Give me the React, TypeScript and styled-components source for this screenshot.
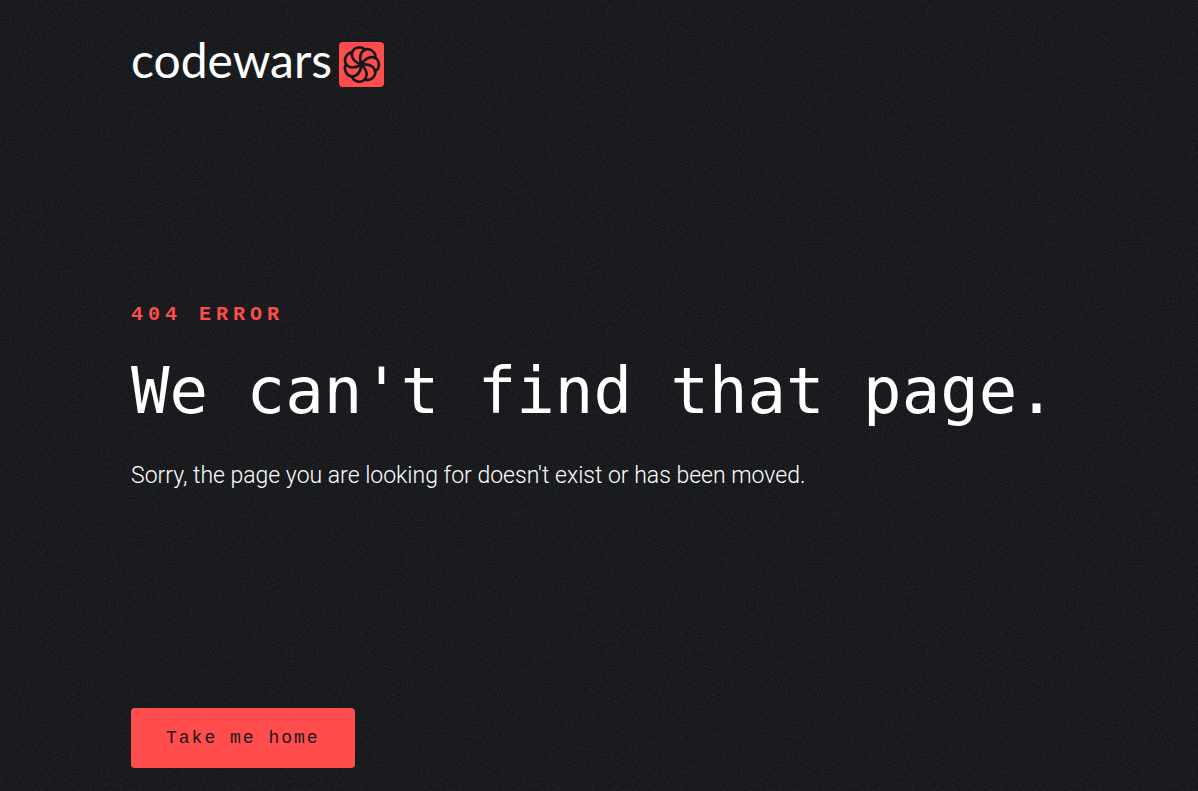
import React from "react";
import styled, { createGlobalStyle } from "styled-components";

const GlobalStyle = createGlobalStyle`
  *, *::before, *::after { box-sizing: border-box; }
  body { margin: 0; background: #16171b; color: #fff; }
`;

const Page = styled.div`
  position: relative;
  isolation: isolate;
  min-height: 100vh;
  padding: 42px 24px 23px;
`;

const Grain = styled.svg`
  position: absolute;
  inset: 0;
  width: 100%;
  height: 100%;
  z-index: -1;
`;

const Container = styled.div`
  max-width: 936px;
  margin: 0 auto;
`;

const Brand = styled.a`
  display: inline-flex;
  align-items: flex-start;
  gap: 7px;
  height: 45px;
  color: #fff;
  text-decoration: none;
`;

const Wordmark = styled.span`
  font: 400 48px/36px Lato, sans-serif;
`;

const EmblemSvg = styled.svg`
  width: 45px;
  height: 45px;
  border-radius: 4px;
  background: #ff4d4d;
`;

const Message = styled.main`
  margin-top: 216px;
`;

const Eyebrow = styled.p`
  margin: 0 0 28px;
  color: #ff4d4d;
  font: 700 20px/24px "Liberation Mono", monospace;
  letter-spacing: 5px;
`;

const Title = styled.h1`
  margin: 0 0 33px;
  font: 400 64px/72px "DejaVu Sans Mono", monospace;
`;

const Detail = styled.p`
  margin: 0 0 216px;
  font: 300 23px/32px Roboto, sans-serif;
`;

const HomeButton = styled.button`
  height: 60px;
  padding: 0 35px;
  border: 0;
  border-radius: 4px;
  background: #ff4d4d;
  color: #17181c;
  font: 400 18px/24px "Liberation Mono", monospace;
  letter-spacing: 2px;
  cursor: pointer;
`;

const PETAL_COUNT = 7;
const PETALS = Array.from({ length: PETAL_COUNT }, (_, i) => (i * 360) / PETAL_COUNT - 15);

function Emblem() {
  return (
    <EmblemSvg viewBox="-22.5 -22.5 45 45" aria-hidden="true">
      <g fill="none" stroke="#17181c" strokeWidth="2.7" strokeLinecap="round">
        {PETALS.map((angle) => (
          <path
            key={angle}
            d="M0 0C-2.4 -1.6 -6.6 -5 -7 -9.8C-7.2 -14.4 -4 -17.4 0 -17.4C3.6 -17.4 6.2 -15.8 7.2 -13.4"
            transform={`rotate(${angle})`}
          />
        ))}
      </g>
    </EmblemSvg>
  );
}

export default function App() {
  return (
    <Page>
      <GlobalStyle />
      <Grain aria-hidden="true">
        <filter id="grain">
          <feTurbulence type="fractalNoise" baseFrequency="0.8" numOctaves="2" stitchTiles="stitch" />
          <feColorMatrix values="0 0 0 0 1  0 0 0 0 1  0 0 0 0 1  0.16 0 0 0 -0.065" />
        </filter>
        <rect width="100%" height="100%" filter="url(#grain)" />
      </Grain>
      <Container>
        <header>
          <Brand href="#" aria-label="codewars">
            <Wordmark>codewars</Wordmark>
            <Emblem />
          </Brand>
        </header>
        <Message>
          <Eyebrow>404 ERROR</Eyebrow>
          <Title>We can't find that page.</Title>
          <Detail>Sorry, the page you are looking for doesn't exist or has been moved.</Detail>
          <HomeButton type="button">Take me home</HomeButton>
        </Message>
      </Container>
    </Page>
  );
}
